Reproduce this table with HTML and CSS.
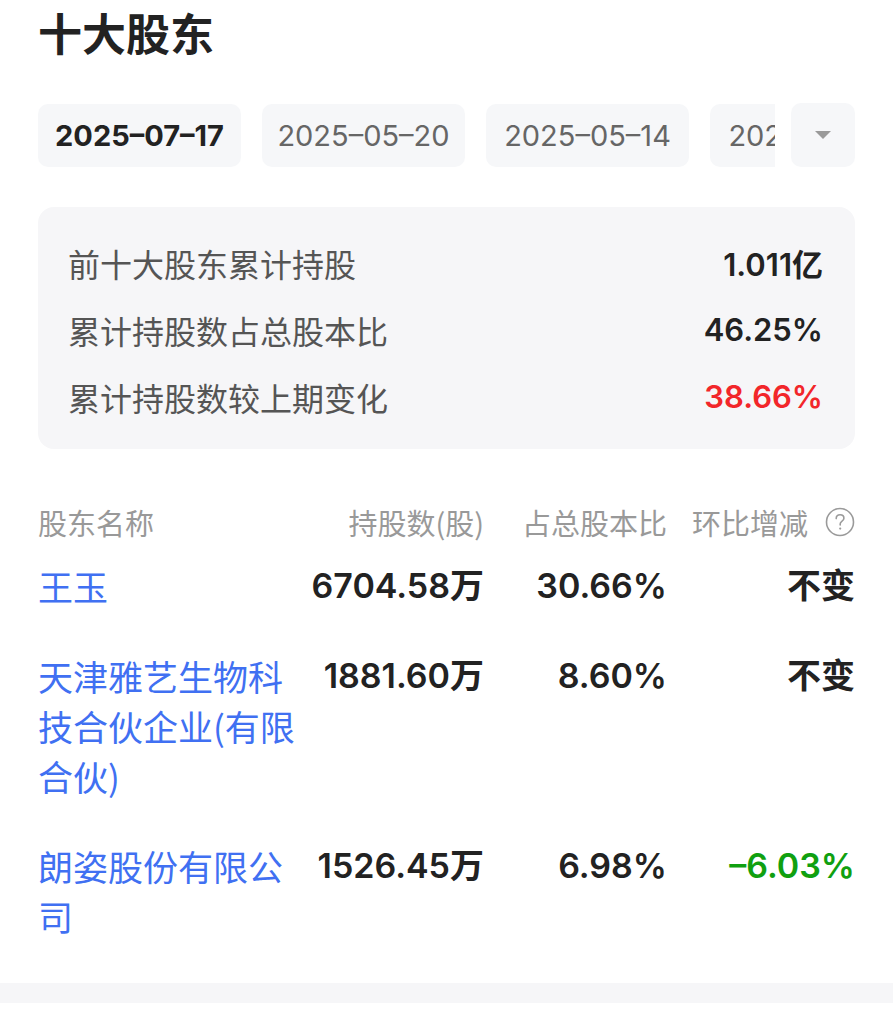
FILE: index.html
```html
<!DOCTYPE html>
<html lang="zh-CN">
<head>
<meta charset="utf-8">
<title>十大股东</title>
<link rel="stylesheet" href="styles.css">
</head>
<body>
<div class="page">
  <h1 class="title">十大股东</h1>

  <div class="dates">
    <div class="tabs">
      <div class="tab active">2025–07–17</div>
      <div class="tab">2025–05–20</div>
      <div class="tab">2025–05–14</div>
      <div class="tab">2025–03–31</div>
    </div>
    <div class="drop"><span class="caret"></span></div>
  </div>

  <div class="summary">
    <div class="srow"><span class="slabel">前十大股东累计持股</span><span class="sval">1.011亿</span></div>
    <div class="srow"><span class="slabel">累计持股数占总股本比</span><span class="sval">46.25%</span></div>
    <div class="srow"><span class="slabel">累计持股数较上期变化</span><span class="sval up">38.66%</span></div>
  </div>

  <div class="table">
    <div class="thead">
      <div class="th name">股东名称</div>
      <div class="th num">持股数(股)</div>
      <div class="th num">占总股本比</div>
      <div class="th num chg">环比增减
        <svg class="help" viewBox="0 0 30 30" width="30" height="30">
          <circle cx="15" cy="15" r="13.5" fill="none" stroke="#9a9a9a" stroke-width="1.6"/>
          <path d="M11.2 11.6c0-2.3 1.7-3.8 3.9-3.8 2.2 0 3.8 1.4 3.8 3.4 0 1.6-0.9 2.4-2.1 3.2-1.1 0.7-1.6 1.3-1.6 2.6v0.9" fill="none" stroke="#9a9a9a" stroke-width="1.6" stroke-linecap="round"/>
          <circle cx="15.2" cy="21.6" r="1.1" fill="#9a9a9a"/>
        </svg>
      </div>
    </div>
    <div class="trow">
      <div class="td name">王玉</div>
      <div class="td num">6704.58万</div>
      <div class="td num">30.66%</div>
      <div class="td num">不变</div>
    </div>
    <div class="trow">
      <div class="td name">天津雅艺生物科技合伙企业(有限合伙)</div>
      <div class="td num">1881.60万</div>
      <div class="td num">8.60%</div>
      <div class="td num">不变</div>
    </div>
    <div class="trow">
      <div class="td name">朗姿股份有限公司</div>
      <div class="td num">1526.45万</div>
      <div class="td num">6.98%</div>
      <div class="td num down">–6.03%</div>
    </div>
  </div>
</div>
<div class="divider"></div>
</body>
</html>
```

FILE: styles.css
```css
html, body {
  margin: 0;
  padding: 0;
  background: #ffffff;
}
body {
  font-family: "Inter", "Noto Sans CJK SC", sans-serif;
  color: #222222;
}
.page {
  padding: 0 38px 22px 38px;
}
.title {
  margin: 0;
  font-size: 44px;
  line-height: 64px;
  font-weight: 700;
  color: #222222;
  font-family: "Noto Sans CJK SC", sans-serif;
}
.dates {
  display: flex;
  align-items: center;
  margin-top: 39px;
  gap: 16px;
}
.tabs {
  flex: 1;
  display: flex;
  gap: 21px;
  overflow: hidden;
  min-width: 0;
}
.tab {
  flex: 0 0 auto;
  width: 203px;
  height: 63px;
  box-sizing: border-box;
  background: #f6f7f9;
  border-radius: 10px;
  display: flex;
  align-items: center;
  justify-content: center;
  font-size: 29px;
  color: #666666;
  white-space: nowrap;
}
.tab.active {
  color: #222222;
  font-weight: 700;
}
.drop {
  flex: 0 0 64px;
  height: 64px;
  border-radius: 10px;
  background: #f6f7f9;
  display: flex;
  align-items: center;
  justify-content: center;
}
.caret {
  width: 0;
  height: 0;
  border-left: 8px solid transparent;
  border-right: 8px solid transparent;
  border-top: 8px solid #9a9a9a;
}
.summary {
  margin-top: 40px;
  background: #f6f6f8;
  border-radius: 16px;
  padding: 22px 32px 19px 30px;
}
.srow {
  display: flex;
  justify-content: space-between;
  align-items: center;
  height: 67px;
}
.slabel {
  font-size: 32px;
  color: #555555;
  font-family: "Noto Sans CJK SC", sans-serif;
}
.sval {
  font-size: 31px;
  font-weight: 600;
  color: #222222;
}
.sval.up {
  color: #f2262a;
}
.table {
  margin-top: 52px;
}
.thead, .trow {
  display: grid;
  grid-template-columns: 265px 181px 183px 1fr;
}
.thead {
  height: 40px;
  align-items: center;
}
.th {
  font-size: 29px;
  color: #999999;
  font-family: "Noto Sans CJK SC", sans-serif;
  white-space: nowrap;
}
.num {
  text-align: right;
}
.chg {
  display: flex;
  align-items: center;
  justify-content: flex-end;
  gap: 17px;
}
.help {
  display: block;
}
.trow {
  padding: 20px 0;
  align-items: start;
}
.td {
  font-size: 34px;
  line-height: 50px;
}
.td.name {
  color: #4070f2;
  font-family: "Noto Sans CJK SC", sans-serif;
  font-size: 35px;
}
.td.num {
  font-weight: 600;
  color: #222222;
}
.td.down {
  color: #10a010;
}
.divider {
  height: 20px;
  background: #f6f6f8;
}
```
